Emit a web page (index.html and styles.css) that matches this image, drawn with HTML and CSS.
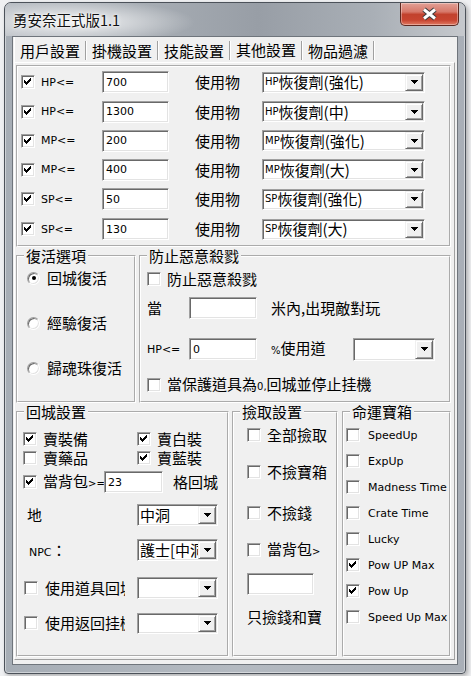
FILE: index.html
```html
<!DOCTYPE html>
<html lang="zh-Hant">
<head>
<meta charset="utf-8">
<title>勇安奈正式版1.1</title>
<link rel="stylesheet" href="styles.css">
</head>
<body>
<div class="window">
  <div class="titlebar">
    <span class="title">勇安奈正式版1.1</span>
    <span class="close"><svg width="17" height="14" viewBox="0 0 17 14"><path d="M3 2.5L14 11.5M14 2.5L3 11.5" stroke="#3a3a3a" stroke-width="5"/><path d="M3 2.5L14 11.5M14 2.5L3 11.5" stroke="#fff" stroke-width="3"/></svg></span>
  </div>
  <div class="client">
    <div class="tabs">
      <div class="tabstrip">
        <span class="tab">用戶設置</span>
        <span class="tab">掛機設置</span>
        <span class="tab">技能設置</span>
        <span class="tab sel">其他設置</span>
        <span class="tab">物品過濾</span>
      </div>
      <div class="panel">
        <fieldset class="grp g-items">
          <div class="body">
            <div class="irow"><span class="cb"><svg class="chk" viewBox="0 0 12 12"><path d="M8 2h1v1h-1zM7 3h2v1h-2zM2 4h1v1h-1zM6 4h3v1h-3zM2 5h2v1h-2zM5 5h3v1h-3zM2 6h5v1h-5zM3 7h3v1h-3zM4 8h1v1h-1z"/></svg></span><span class="hp">HP&lt;=</span><span class="tb w67">700</span><span class="c use">使用物</span><span class="dd w163"><span class="dd-t c"><span class="sm">HP</span>恢復劑(強化)</span><span class="dd-b"><svg class="tri" viewBox="0 0 7 4"><path d="M0 0H7V1H6V2H5V3H4V4H3V3H2V2H1V1H0Z"/></svg></span></span></div>
            <div class="irow"><span class="cb"><svg class="chk" viewBox="0 0 12 12"><path d="M8 2h1v1h-1zM7 3h2v1h-2zM2 4h1v1h-1zM6 4h3v1h-3zM2 5h2v1h-2zM5 5h3v1h-3zM2 6h5v1h-5zM3 7h3v1h-3zM4 8h1v1h-1z"/></svg></span><span class="hp">HP&lt;=</span><span class="tb w67">1300</span><span class="c use">使用物</span><span class="dd w163"><span class="dd-t c"><span class="sm">HP</span>恢復劑(中)</span><span class="dd-b"><svg class="tri" viewBox="0 0 7 4"><path d="M0 0H7V1H6V2H5V3H4V4H3V3H2V2H1V1H0Z"/></svg></span></span></div>
            <div class="irow"><span class="cb"><svg class="chk" viewBox="0 0 12 12"><path d="M8 2h1v1h-1zM7 3h2v1h-2zM2 4h1v1h-1zM6 4h3v1h-3zM2 5h2v1h-2zM5 5h3v1h-3zM2 6h5v1h-5zM3 7h3v1h-3zM4 8h1v1h-1z"/></svg></span><span class="hp">MP&lt;=</span><span class="tb w67">200</span><span class="c use">使用物</span><span class="dd w163"><span class="dd-t c"><span class="sm">MP</span>恢復劑(強化)</span><span class="dd-b"><svg class="tri" viewBox="0 0 7 4"><path d="M0 0H7V1H6V2H5V3H4V4H3V3H2V2H1V1H0Z"/></svg></span></span></div>
            <div class="irow"><span class="cb"><svg class="chk" viewBox="0 0 12 12"><path d="M8 2h1v1h-1zM7 3h2v1h-2zM2 4h1v1h-1zM6 4h3v1h-3zM2 5h2v1h-2zM5 5h3v1h-3zM2 6h5v1h-5zM3 7h3v1h-3zM4 8h1v1h-1z"/></svg></span><span class="hp">MP&lt;=</span><span class="tb w67">400</span><span class="c use">使用物</span><span class="dd w163"><span class="dd-t c"><span class="sm">MP</span>恢復劑(大)</span><span class="dd-b"><svg class="tri" viewBox="0 0 7 4"><path d="M0 0H7V1H6V2H5V3H4V4H3V3H2V2H1V1H0Z"/></svg></span></span></div>
            <div class="irow"><span class="cb"><svg class="chk" viewBox="0 0 12 12"><path d="M8 2h1v1h-1zM7 3h2v1h-2zM2 4h1v1h-1zM6 4h3v1h-3zM2 5h2v1h-2zM5 5h3v1h-3zM2 6h5v1h-5zM3 7h3v1h-3zM4 8h1v1h-1z"/></svg></span><span class="hp">SP&lt;=</span><span class="tb w67">50</span><span class="c use">使用物</span><span class="dd w163"><span class="dd-t c"><span class="sm">SP</span>恢復劑(強化)</span><span class="dd-b"><svg class="tri" viewBox="0 0 7 4"><path d="M0 0H7V1H6V2H5V3H4V4H3V3H2V2H1V1H0Z"/></svg></span></span></div>
            <div class="irow"><span class="cb"><svg class="chk" viewBox="0 0 12 12"><path d="M8 2h1v1h-1zM7 3h2v1h-2zM2 4h1v1h-1zM6 4h3v1h-3zM2 5h2v1h-2zM5 5h3v1h-3zM2 6h5v1h-5zM3 7h3v1h-3zM4 8h1v1h-1z"/></svg></span><span class="hp">SP&lt;=</span><span class="tb w67">130</span><span class="c use">使用物</span><span class="dd w163"><span class="dd-t c"><span class="sm">SP</span>恢復劑(大)</span><span class="dd-b"><svg class="tri" viewBox="0 0 7 4"><path d="M0 0H7V1H6V2H5V3H4V4H3V3H2V2H1V1H0Z"/></svg></span></span></div>
          </div>
        </fieldset>

        <div class="row2">
          <fieldset class="grp g-revive">
            <legend>復活選項</legend>
            <div class="body">
              <div class="rrow"><span class="rb on"></span><span class="c rtxt">回城復活</span></div>
              <div class="rrow"><span class="rb"></span><span class="c rtxt">經驗復活</span></div>
              <div class="rrow"><span class="rb"></span><span class="c rtxt">歸魂珠復活</span></div>
            </div>
          </fieldset>
          <fieldset class="grp g-pk">
            <legend>防止惡意殺戮</legend>
            <div class="body">
              <div class="row"><span class="cb"></span><span class="c gap6">防止惡意殺戮</span></div>
              <div class="row"><span class="c k42">當</span><span class="tb w68 h22"></span><span class="c gap14">米內,出現敵對玩</span></div>
              <div class="row"><span class="k42">HP&lt;=</span><span class="tb w68 h22">0</span><span class="c gap14 k82"><span class="sm">%</span>使用道</span><span class="dd w82 h23"><span class="dd-t c"></span><span class="dd-b"><svg class="tri" viewBox="0 0 7 4"><path d="M0 0H7V1H6V2H5V3H4V4H3V3H2V2H1V1H0Z"/></svg></span></span></div>
              <div class="row"><span class="cb"></span><span class="c gap6">當保護道具為<span class="sm">0,</span>回城並停止挂機</span></div>
            </div>
          </fieldset>
        </div>

        <div class="row3">
          <fieldset class="grp g-town">
            <legend>回城設置</legend>
            <div class="body">
              <div class="row">
                <span class="cell"><span class="cb"><svg class="chk" viewBox="0 0 12 12"><path d="M8 2h1v1h-1zM7 3h2v1h-2zM2 4h1v1h-1zM6 4h3v1h-3zM2 5h2v1h-2zM5 5h3v1h-3zM2 6h5v1h-5zM3 7h3v1h-3zM4 8h1v1h-1z"/></svg></span><span class="c gap6">賣裝備</span></span>
                <span class="cell"><span class="cb"><svg class="chk" viewBox="0 0 12 12"><path d="M8 2h1v1h-1zM7 3h2v1h-2zM2 4h1v1h-1zM6 4h3v1h-3zM2 5h2v1h-2zM5 5h3v1h-3zM2 6h5v1h-5zM3 7h3v1h-3zM4 8h1v1h-1z"/></svg></span><span class="c gap6">賣白裝</span></span>
              </div>
              <div class="row">
                <span class="cell"><span class="cb"></span><span class="c gap6">賣藥品</span></span>
                <span class="cell"><span class="cb"><svg class="chk" viewBox="0 0 12 12"><path d="M8 2h1v1h-1zM7 3h2v1h-2zM2 4h1v1h-1zM6 4h3v1h-3zM2 5h2v1h-2zM5 5h3v1h-3zM2 6h5v1h-5zM3 7h3v1h-3zM4 8h1v1h-1z"/></svg></span><span class="c gap6">賣藍裝</span></span>
              </div>
              <div class="row">
                <span class="cb"><svg class="chk" viewBox="0 0 12 12"><path d="M8 2h1v1h-1zM7 3h2v1h-2zM2 4h1v1h-1zM6 4h3v1h-3zM2 5h2v1h-2zM5 5h3v1h-3zM2 6h5v1h-5zM3 7h3v1h-3zM4 8h1v1h-1z"/></svg></span><span class="c gap6 clip61">當背包<span class="sm">&gt;=</span></span><span class="tb w59 h22">23</span><span class="c gap10">格回城</span>
              </div>
              <div class="row"><span class="c k114 pl4">地</span><span class="dd w81 h22"><span class="dd-t c">中洞</span><span class="dd-b"><svg class="tri" viewBox="0 0 7 4"><path d="M0 0H7V1H6V2H5V3H4V4H3V3H2V2H1V1H0Z"/></svg></span></span></div>
              <div class="row"><span class="k114 pl6">NPC<span class="c">：</span></span><span class="dd w81 h22"><span class="dd-t c clipx">護士[中洞</span><span class="dd-b"><svg class="tri" viewBox="0 0 7 4"><path d="M0 0H7V1H6V2H5V3H4V4H3V3H2V2H1V1H0Z"/></svg></span></span></div>
              <div class="row"><span class="cb ml1"></span><span class="c clip80">使用道具回城</span><span class="dd w81 h22 ml12"><span class="dd-t c"></span><span class="dd-b"><svg class="tri" viewBox="0 0 7 4"><path d="M0 0H7V1H6V2H5V3H4V4H3V3H2V2H1V1H0Z"/></svg></span></span></div>
              <div class="row"><span class="cb ml1"></span><span class="c clip80">使用返回挂機</span><span class="dd w81 ml12"><span class="dd-t c"></span><span class="dd-b"><svg class="tri" viewBox="0 0 7 4"><path d="M0 0H7V1H6V2H5V3H4V4H3V3H2V2H1V1H0Z"/></svg></span></span></div>
            </div>
          </fieldset>

          <fieldset class="grp g-pick">
            <legend>撿取設置</legend>
            <div class="body">
              <div class="row"><span class="cb"></span><span class="c gap6">全部撿取</span></div>
              <div class="row"><span class="cb"></span><span class="c gap6">不撿寶箱</span></div>
              <div class="row"><span class="cb"></span><span class="c gap6">不撿錢</span></div>
              <div class="row"><span class="cb"></span><span class="c gap6">當背包<span class="sm">&gt;</span></span></div>
              <div class="row"><span class="tb w67 h22"></span></div>
              <div class="row"><span class="c">只撿錢和寶</span></div>
            </div>
          </fieldset>

          <fieldset class="grp g-chest">
            <legend>命運寶箱</legend>
            <div class="body">
              <div class="row"><span class="cb"></span><span class="ltxt">SpeedUp</span></div>
              <div class="row"><span class="cb"></span><span class="ltxt">ExpUp</span></div>
              <div class="row"><span class="cb"></span><span class="ltxt">Madness Time</span></div>
              <div class="row"><span class="cb"></span><span class="ltxt">Crate Time</span></div>
              <div class="row"><span class="cb"></span><span class="ltxt">Lucky</span></div>
              <div class="row"><span class="cb"><svg class="chk" viewBox="0 0 12 12"><path d="M8 2h1v1h-1zM7 3h2v1h-2zM2 4h1v1h-1zM6 4h3v1h-3zM2 5h2v1h-2zM5 5h3v1h-3zM2 6h5v1h-5zM3 7h3v1h-3zM4 8h1v1h-1z"/></svg></span><span class="ltxt">Pow UP Max</span></div>
              <div class="row"><span class="cb"><svg class="chk" viewBox="0 0 12 12"><path d="M8 2h1v1h-1zM7 3h2v1h-2zM2 4h1v1h-1zM6 4h3v1h-3zM2 5h2v1h-2zM5 5h3v1h-3zM2 6h5v1h-5zM3 7h3v1h-3zM4 8h1v1h-1z"/></svg></span><span class="ltxt">Pow Up</span></div>
              <div class="row"><span class="cb"></span><span class="ltxt">Speed Up Max</span></div>
            </div>
          </fieldset>
        </div>
      </div>
    </div>
  </div>
</div>
</body>
</html>
```

FILE: styles.css
```css
* { box-sizing: border-box; }
html, body { margin: 0; padding: 0; }
body {
  width: 471px;
  height: 676px;
  overflow: hidden;
  background: #eff0f2;
  font-family: "DejaVu Sans", "Noto Sans CJK TC", sans-serif;
  font-size: 11px;
  color: #000;
}

/* window frame */
.window {
  margin: 2px 0 0 4px;
  width: 462px;
  height: 672px;
  border: 1px solid #4c525a;
  border-radius: 7px 7px 4px 4px;
  background: linear-gradient(to right, #a6adb5 0%, #b4bac1 50%, #a9afb7 100%);
  box-shadow: inset 0 0 0 1px rgba(255,255,255,.45), 2px 2px 4px rgba(0,0,0,.28);
  display: flex;
  flex-direction: column;
}
.titlebar {
  height: 33px;
  flex: none;
  display: flex;
  align-items: center;
  justify-content: space-between;
  padding: 0 6px 0 8px;
  border-radius: 6px 6px 0 0;
  background:
    radial-gradient(120px 22px at 70px 19px, rgba(255,255,255,.85), rgba(255,255,255,0) 100%),
    linear-gradient(to right, #b9bec4 0%, #a7adb4 30%, #989ea6 55%, #a9afb6 80%, #c6c9cd 100%);
}
.title {
  font-family: "Noto Sans CJK TC", sans-serif;
  font-size: 14.5px;
  line-height: 18px;
  color: #111;
  text-shadow: 0 0 5px #fff, 0 0 2px #fff;
}
.close {
  align-self: flex-start;
  width: 59px;
  height: 23px;
  display: flex;
  align-items: center;
  justify-content: center;
  border: 1px solid #5e2820;
  border-top: none;
  border-radius: 0 0 5px 5px;
  background: linear-gradient(to bottom, #e2a196 0%, #d7786a 40%, #c2412d 52%, #c84531 78%, #e07a62 100%);
  box-shadow: inset 0 0 0 1px rgba(255,255,255,.35);
}

/* client area */
.client {
  margin: 0 7px;
  height: 629px;
  flex: none;
  border: 1px solid #6f757c;
  background: #f0f0f0;
}
.tabs { margin-left: 1px; width: 441px; }
.tabstrip {
  display: flex;
  height: 25px;
  border-left: 1px solid #fff;
}
.tab {
  display: flex;
  align-items: center;
  padding: 2px 0 0 5px;
  margin-right: 1px;
  font-family: "Noto Sans CJK TC", sans-serif;
  font-size: 15px;
  line-height: 17px;
  white-space: nowrap;
}
.tab.sel { padding-top: 0; }
.tab::after {
  content: "";
  align-self: flex-end;
  width: 1px;
  height: 19px;
  margin: 0 0 2px 5px;
  background: #a0a0a0;
  box-shadow: 1px 0 0 #fff;
}
.panel {
  border: 1px solid;
  border-color: #fff #a0a0a0 #a0a0a0 #fff;
  padding: 2px 3px 2px 1px;
}

/* group boxes */
.grp {
  margin: 0;
  padding: 0;
  min-width: 0;
  border: 2px groove #fff;
}
.grp legend {
  margin-left: 6px;
  padding: 0 2px;
  font-family: "Noto Sans CJK TC", sans-serif;
  font-size: 15px;
  line-height: 16px;
  white-space: nowrap;
}
.g-items { height: 182px; }
.g-items .body {
  display: grid;
  grid-template-rows: 30px 29px 29px 29px 30px 30px;
  padding-left: 3px;
}
.row2 { display: flex; gap: 3px; margin-top: 1px; height: 155px; }
.row3 { display: flex; gap: 3px; margin-top: 1px; height: 253px; }
.g-revive { width: 120px; flex: none; }
.g-pk { width: 312px; flex: none; }
.g-town { width: 213px; flex: none; }
.g-pick { width: 106px; flex: none; margin-right: 1px; }
.g-chest { width: 109px; flex: none; }

.g-revive .body {
  display: flex;
  flex-direction: column;
  gap: 25px;
  padding: 4px 0 0 9px;
}
.rrow { height: 20px; display: flex; align-items: center; }
.rtxt { margin-left: 7px; }

.g-pk .body {
  display: grid;
  grid-template-rows: 30px 28px 54px 18px;
  padding-left: 6px;
}
.g-town .body {
  display: grid;
  grid-template-rows: 18px 20px 28px 38px 32px 44px 26px;
  padding: 10px 0 0 5px;
}
.g-pick .body {
  display: grid;
  grid-template-rows: 30px 44px 38px 36px 32px 34px;
  padding-left: 13px;
}
.g-chest .body {
  display: grid;
  grid-template-rows: repeat(8, 26px);
  padding: 2px 0 0 2px;
}

.irow, .row { display: flex; align-items: center; white-space: nowrap; }
.cell { display: flex; align-items: center; width: 114px; flex: none; }

/* text */
.c {
  font-family: "Noto Sans CJK TC", sans-serif;
  font-size: 15px;
  line-height: 18px;
  white-space: nowrap;
}
.sm { font-family: "DejaVu Sans", sans-serif; font-size: 10px; }
.hp { width: 61px; margin-left: 6px; flex: none; }
.use { margin-left: 26px; width: 67px; flex: none; }
.gap6 { margin-left: 6px; }
.gap10 { margin-left: 10px; }
.gap14 { margin-left: 14px; }
.k42 { width: 42px; flex: none; }
.k82 { width: 82px; flex: none; }
.k114 { width: 114px; flex: none; }
.pl4 { padding-left: 4px; }
.pl6 { padding-left: 6px; }
.ml1 { margin-left: 1px; }
.ml12 { margin-left: 12px; }
.clip61 { width: 61px; flex: none; overflow-x: clip; }
.clip80 { width: 80px; flex: none; overflow-x: clip; margin-left: 7px; }
.clipx { overflow-x: clip; }
.ltxt { margin-left: 8px; width: 81px; flex: none; overflow-x: clip; white-space: nowrap; }

/* controls */
.cb {
  width: 14px;
  height: 14px;
  flex: none;
  display: inline-block;
  background: #fff;
  border: 1px solid;
  border-color: #a0a0a0 #fff #fff #a0a0a0;
  box-shadow: inset 1px 1px 0 #696969, inset -1px -1px 0 #e3e3e3;
}
.chk { display: block; width: 12px; height: 12px; fill: #000; shape-rendering: crispEdges; }
.rb {
  width: 13px;
  height: 13px;
  flex: none;
  border-radius: 50%;
  background: #fff;
  border: 1px solid;
  border-color: #a0a0a0 #fff #fff #a0a0a0;
  box-shadow: inset 1px 1px 0 #696969, inset -1px -1px 0 #e3e3e3;
  display: flex;
  align-items: center;
  justify-content: center;
}
.rb.on::after {
  content: "";
  width: 4px;
  height: 4px;
  border-radius: 50%;
  background: #000;
}
.tb {
  height: 22px;
  flex: none;
  display: flex;
  align-items: center;
  padding: 0 3px;
  background: #fff;
  border: 1px solid;
  border-color: #a0a0a0 #fff #fff #a0a0a0;
  box-shadow: inset 1px 1px 0 #696969, inset -1px -1px 0 #e3e3e3;
}
.dd {
  height: 21px;
  flex: none;
  display: flex;
  padding: 1px;
  background: #fff;
  border: 1px solid;
  border-color: #a0a0a0 #fff #fff #a0a0a0;
  box-shadow: inset 1px 1px 0 #696969, inset -1px -1px 0 #e3e3e3;
}
.dd-t {
  flex: 1;
  min-width: 0;
  padding-left: 1px;
  line-height: 16px;
  display: flex;
  align-items: center;
}
.dd-b {
  width: 18px;
  flex: none;
  display: flex;
  align-items: center;
  justify-content: center;
  background: #f0f0f0;
  border: 1px solid;
  border-color: #f0f0f0 #696969 #696969 #f0f0f0;
  box-shadow: inset 1px 1px 0 #fff, inset -1px -1px 0 #a0a0a0;
}
.tri { width: 7px; height: 4px; fill: #000; shape-rendering: crispEdges; }
.w59 { width: 59px; }
.w67 { width: 67px; }
.w68 { width: 68px; }
.w81 { width: 81px; }
.w82 { width: 82px; }
.w163 { width: 163px; }
.h22 { height: 22px; }
.h23 { height: 23px; }
```
